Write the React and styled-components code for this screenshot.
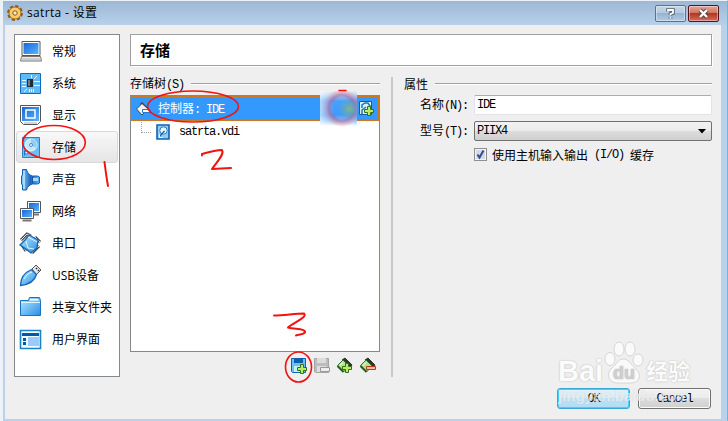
import React from "react";
import styled, { createGlobalStyle, css } from "styled-components";

const GlobalStyle = createGlobalStyle`
  * {
    box-sizing: border-box;
  }
  body {
    margin: 0;
    overflow: hidden;
    font-family: "Noto Sans CJK SC", sans-serif;
    font-size: 12px;
    color: #000;
  }
  svg {
    display: block;
    flex-shrink: 0;
  }
`;

const Window = styled.div`
  position: relative;
  width: 728px;
  height: 421px;
  padding: 0 6px 2px 2px;
  border-top: 1px solid #eef2f6;
  border-left: 3px solid #edf2f9;
  border-right: 1px solid #45c8f0;
  background: linear-gradient(#9db8d5, #b9d1ea 25px, #b9d1ea);
`;

const TitleBar = styled.div`
  display: flex;
  align-items: center;
  height: 24px;
  margin-left: -2px;
  padding-left: 4px;
`;

const Title = styled.span`
  flex: 1;
  margin-left: 4px;
  font-family: "Open Sans", "Noto Sans CJK SC", sans-serif;
  font-size: 12px;
  letter-spacing: 0.35px;
  line-height: 24px;
`;

const CaptionButton = styled.div`
  display: flex;
  align-items: center;
  justify-content: center;
  width: 31px;
  height: 17px;
  margin: 1px 2px 0 0;
  border: 1px solid ${(props) => (props.$close ? "#4e1420" : "#5b7190")};
  border-radius: 2px;
  box-shadow: inset 0 0 0 1px rgba(255, 255, 255, 0.4);
  background: ${(props) =>
    props.$close
      ? "linear-gradient(#e3a598, #d0735f 49%, #b93420 50%, #cf7058)"
      : "linear-gradient(#c3d5e9, #b3c9e1 49%, #97b3d1 50%, #b2cae4)"};
`;

const Body = styled.div`
  display: flex;
  height: 394px;
  padding: 9px 9px 0;
  background: #efefef;
`;

const Sidebar = styled.div`
  width: 106px;
  height: 343px;
  border: 1px solid #828790;
  background: #fff;
`;

const SideItem = styled.div`
  display: flex;
  align-items: center;
  height: 32px;
  margin: 0 1px;
  padding: 1px 0 0 2px;
  border: 1px solid transparent;
  border-radius: 3px;
  white-space: nowrap;
  ${(props) =>
    props.$active &&
    css`
      border-color: #d9d9d9;
      background: linear-gradient(#f8f8f8, #e5e5e5);
    `}
`;

const SideLabel = styled.span`
  margin: 1px 0 0 10px;
  font-family: "Open Sans", "Noto Sans CJK SC", sans-serif;
  line-height: 18px;
`;

const Main = styled.div`
  width: 582px;
  margin-left: 10px;
`;

const Header = styled.div`
  height: 32px;
  padding-left: 9px;
  border: 1px solid #a0a0a0;
  box-shadow: 1px 1px 0 #fff;
  background: #fff;
  font-size: 15px;
  font-weight: 700;
  line-height: 30px;
`;

const Columns = styled.div`
  display: flex;
  margin-top: 8px;
`;

const TreeColumn = styled.div`
  width: 250px;
`;

const Splitter = styled.div`
  width: 2px;
  height: 300px;
  margin: 3px 11px 0;
  background: #c8c8c8;
`;

const PropColumn = styled.div`
  width: 308px;
`;

const GroupTitle = styled.div`
  display: flex;
  align-items: center;
  height: 18px;
  margin-bottom: 3px;
  white-space: nowrap;

  &::after {
    content: "";
    flex: 1;
    height: 1px;
    margin-left: 7px;
    background: #a0a0a0;
    box-shadow: 0 1px 0 #fff;
  }
`;

// half-width characters are 6px wide
const Mono = styled.span`
  font-family: "Liberation Mono", monospace;
  font-size: 12px;
  letter-spacing: -1.2px;
  white-space: pre;
`;

const Tree = styled.div`
  height: 257px;
  border: 1px solid #828790;
  background: #fff;
`;

const TreeRow = styled.div`
  display: flex;
  align-items: center;
  height: 25px;
  padding: 0 3px;
  border: 1px dotted #d07a20;
  background: #3399ff;
  color: #fff;
`;

const TreeText = styled.span`
  flex: 1;
  margin-left: 6px;
  line-height: 18px;
`;

const TreeChild = styled.div`
  display: flex;
  align-items: center;
  gap: 9px;
  height: 22px;
  padding-left: 10px;
`;

const Branch = styled.div`
  width: 10px;
  height: 11px;
  margin: -10px -4px 0 0;
  border-left: 1px dotted #a0a0a0;
  border-bottom: 1px dotted #a0a0a0;
`;

const TreeTools = styled.div`
  display: flex;
  justify-content: flex-end;
  gap: 5px;
  padding: 5px 3px 0 0;
`;

const Field = styled.div`
  display: flex;
  align-items: center;
  height: 20px;
  margin-bottom: 6px;
`;

const FieldLabel = styled.span`
  width: 70px;
  padding-left: 16px;
  line-height: 18px;
  white-space: nowrap;
`;

const Input = styled.div`
  display: flex;
  align-items: center;
  width: 238px;
  height: 20px;
  padding-left: 2px;
  border: 1px solid #e2e3ea;
  border-top-color: #abadb3;
  border-radius: 2px;
  background: #fff;
`;

const Select = styled(Input)`
  justify-content: space-between;
  padding-right: 5px;
  border: 1px solid #707070;
  background: linear-gradient(#f2f2f2, #ebebeb 49%, #dddddd 50%, #cfcfcf);
`;

const CheckLine = styled.div`
  display: flex;
  align-items: center;
  height: 15px;
  margin-left: 70px;
  white-space: nowrap;
`;

const Check = styled.div`
  width: 13px;
  height: 13px;
  margin-right: 5px;
  border: 1px solid #8e8f8f;
  box-shadow: inset 0 0 0 1px #f4f4f4;
  background: #d5dae1;
`;

const Buttons = styled.div`
  display: flex;
  justify-content: flex-end;
  gap: 8px;
  margin-top: 11px;
  padding-right: 1px;
`;

const Button = styled.div`
  display: flex;
  align-items: center;
  justify-content: center;
  width: 73px;
  height: 21px;
  border: 1px solid ${(props) => (props.$primary ? "#3ba8d8" : "#707070")};
  border-radius: 3px;
  box-shadow: inset 0 0 0 1px ${(props) => (props.$primary ? "#42d3f5" : "#fafafa")};
  background: ${(props) =>
    props.$primary
      ? "linear-gradient(#e2f1fa, #d4ebf8 49%, #bce2f7 50%, #b0dcf4)"
      : "linear-gradient(#f2f2f2, #ebebeb 49%, #dddddd 50%, #cfcfcf)"};
`;

const Smudge = styled.div`
  position: absolute;
  left: 317px;
  top: 90px;
  width: 37px;
  height: 36px;
  background: radial-gradient(circle at 29px 18px, #7fb58d 0, rgba(110, 170, 170, 0.8) 4px, transparent 10px),
    radial-gradient(circle at 22px 17px, transparent 9px, rgba(170, 90, 150, 0.55) 13px, rgba(240, 130, 140, 0.4) 16px, transparent 19px),
    linear-gradient(90deg, rgba(255, 255, 255, 0.6), transparent 14px),
    linear-gradient(#efefef 0, #a7cdf5 5px, #49a0fa 10px, #3d9cfb 24px, #86c0fa 29px, #fff 35px);
`;

const Marks = styled.svg`
  position: absolute;
  left: -3px;
  top: -1px;
  pointer-events: none;
`;

const Watermark = styled.div`
  position: absolute;
  left: 555px;
  top: 340px;
  width: 160px;
  height: 65px;
  pointer-events: none;
`;

const MarkLine = styled.div`
  display: flex;
  align-items: flex-end;
  height: 44px;
  color: #fbfbfb;
  font-family: "Liberation Sans", "Noto Sans CJK SC", sans-serif;
  font-size: 29px;
  font-weight: 700;
  line-height: 28px;
  text-shadow: 0 0 1px #bbb, 0 0 2px #ccc;
`;

const MarkCn = styled.span`
  margin-left: 2px;
  font-size: 22px;
  line-height: 26px;
`;

const MarkUrl = styled.div`
  margin-top: 2px;
  color: rgba(255, 255, 255, 0.65);
  font-family: "Liberation Sans", sans-serif;
  font-size: 15px;
  font-weight: 700;
  line-height: 18px;
  text-shadow: 0 0 1px rgba(150, 150, 150, 0.4);
`;

const PawText = styled.text`
  font-family: "Liberation Sans", sans-serif;
  font-size: 18px;
  font-weight: 700;
`;

const Defs = () => (
  <defs>
    <linearGradient id="screen" x1="0" y1="0" x2="1" y2="1">
      <stop offset="0" stopColor="#1568d8" />
      <stop offset="1" stopColor="#5cb2fc" />
    </linearGradient>
    <linearGradient id="sky" x1="0" y1="0" x2="1" y2="1">
      <stop offset="0" stopColor="#b9ecff" />
      <stop offset="1" stopColor="#288ee8" />
    </linearGradient>
    <linearGradient id="horn" x1="0" y1="0" x2="1" y2="0">
      <stop offset="0" stopColor="#8fd0fb" />
      <stop offset="0.5" stopColor="#1b66bd" />
      <stop offset="1" stopColor="#5bb3f3" />
    </linearGradient>
  </defs>
);

const sideIcons = {
  general: (
    <>
      <path d="M3 1.500h18v14H3z" fill="#fff" stroke="#555" />
      <path d="M4.500 3h15v11h-15z" fill="url(#screen)" />
      <path d="M2.500 16.500h19l1 4.500h-21z" fill="#eee" stroke="#777" />
      <path d="M3 19h18" stroke="#aaa" />
    </>
  ),
  system: (
    <>
      <path d="M1.500 1.500h20v20h-20z" fill="#5eb9f5" stroke="#126bb8" />
      <path d="M8 7h6v8H8z" fill="#242c33" />
      <path d="M9 8h2v6H9z" fill="#737c83" />
      <path d="M3 8.500h4M3 11.500h4M3 14.500h4M15 9.500h6M15 13.500h6M10.500 17v3M12.500 17v3M14.500 17v3M12.500 3v3M15 7l3-3M5 20l3-3" stroke="#e9faff" fill="none" />
    </>
  ),
  display: (
    <>
      <path d="M1.500 1.500h20v16l-3 3h-14l-3-3z" fill="#fff" stroke="#555" />
      <path d="M3 3h17v14H3z" fill="url(#screen)" />
      <path d="M7 6h9v8H7z" fill="none" stroke="#fff" strokeWidth="1.500" />
      <path d="M5 19h13" stroke="#aaa" />
    </>
  ),
  storage: (
    <>
      <path d="M3.500 1.500h17v20h-17z" fill="#6fbdf2" stroke="#2f7fc6" />
      <circle cx="12" cy="9" r="6" fill="#c3e8fc" stroke="#eafaff" />
      <path d="M12 3a6 6 0 0 1 5 9l-5-3z" fill="#93cdf3" />
      <circle cx="12" cy="9" r="1.500" fill="#fff" stroke="#3c8dd0" />
      <path d="M5.500 19.500v-5l3 1 5 3.500" fill="none" stroke="#2474b9" />
      <circle cx="7.500" cy="16.500" r="1.600" fill="#d5f1ff" stroke="#2474b9" />
    </>
  ),
  audio: (
    <>
      <path d="M3.500 1.500h4c1 4 3 5.500 6 6.500h5l2 1v6l-2 1h-5c-3 1-5 2.500-6 6h-4V17l-1-1V8l1-1z" fill="url(#horn)" stroke="#1760ad" />
      <path d="M4 3h2v18H4z" fill="#a9dcfc" />
      <path d="M14 10h5v3h-5z" fill="#a4dcfb" />
      <path d="M13.500 8v8" stroke="#165ba5" />
    </>
  ),
  network: (
    <>
      <path d="M8.500 1.500h13v11h-13z" fill="#fff" stroke="#555" />
      <path d="M10 3h10v8H10z" fill="url(#screen)" />
      <path d="M15 14.500h5" stroke="#777" strokeWidth="2" />
      <path d="M1.500 8.500h13v10h-13z" fill="#fff" stroke="#555" />
      <path d="M3 10h10v7H3z" fill="url(#screen)" />
      <path d="M3.500 20.500h9" stroke="#777" strokeWidth="2" />
    </>
  ),
  serial: (
    <>
      <path d="M2 8l6-6 4 2M16 5l5 5M3 13l4 6M13 21l7-7" fill="none" stroke="#444" strokeWidth="3" />
      <path d="M2 8l6-6 4 2M16 5l5 5M3 13l4 6M13 21l7-7" fill="none" stroke="#eee" />
      <path d="M10 3l9 5-1 8-6 5-8-6-3-2 5-5z" fill="url(#sky)" stroke="#1262ab" strokeWidth="1.300" />
      <path d="M7 9l2 7M9 5l9 5M9 16l6 1" fill="none" stroke="#ddf7ff" />
    </>
  ),
  usb: (
    <>
      <path d="M13 5l4-4 5 5-5 5z" fill="#e8e8e8" stroke="#555" />
      <path d="M17 4l1 1M19 6l1 1" stroke="#222" strokeWidth="1.500" />
      <path d="M1.500 21.500c0-8 4-13 11-16l5 5c-2 7-7 10-16 11z" fill="url(#sky)" stroke="#1767b2" strokeWidth="1.300" />
      <path d="M5 15c2-4 5-6 8-7" stroke="#dff9ff" fill="none" />
    </>
  ),
  folder: (
    <>
      <path d="M1.500 19.500v-15h8l1-3h10l1 3v15z" fill="url(#sky)" stroke="#1972bd" />
      <path d="M11 3h8l1 1.500h-9z" fill="#fff" />
      <path d="M2 6.500h19" stroke="#d9f5ff" />
    </>
  ),
  ui: (
    <>
      <path d="M1.500 2.500h20v18h-20z" fill="#eefbff" stroke="#1b82ca" strokeWidth="1.600" />
      <path d="M3 5h17v3H3zM4 10h3v3H4zM4 14h3v3H4z" fill="#0755a4" />
      <path d="M9 9h11v9H9z" fill="#9bcaff" />
    </>
  ),
};

const sections = [
  ["general", "常规"],
  ["system", "系统"],
  ["display", "显示"],
  ["storage", "存储"],
  ["audio", "声音"],
  ["network", "网络"],
  ["serial", "串口"],
  ["usb", "USB设备"],
  ["folder", "共享文件夹"],
  ["ui", "用户界面"],
];

const Plus = () => (
  <path d="M9.500 6.500h3v3h3v3h-3v3h-3v-3h-3v-3h3z" fill="#b7ee66" stroke="#347018" />
);

const Floppy = ({ disabled }) => (
  <svg width="18" height="18" viewBox="0 0 18 18">
    <path
      d="M1.500 1.500h14v14h-13l-1-1z"
      fill={disabled ? "#bdbdbd" : "#6fc0f2"}
      stroke={disabled ? "#a4a4a4" : "#0965ad"}
    />
    <path d="M4 1h9v5H4z" fill={disabled ? "#dcdcdc" : "#0b5fae"} />
    <path d="M4 9h9v6H4z" fill={disabled ? "#dedede" : "#c5efff"} />
    {disabled ? (
      <path d="M7.500 10.500h9v4h-9z" fill="#eee" stroke="#999" />
    ) : (
      <g transform="translate(1 1)">
        <Plus />
      </g>
    )}
  </svg>
);

const Controller = ({ remove }) => (
  <svg width="18" height="18" viewBox="0 0 18 18">
    <path d="M6 3l3-2 7 7-2 3z" fill="#30362e" stroke="#30362e" />
    <path d="M1.500 8.500L7 3l6 6-5.500 6z" fill="#b9e08f" stroke="#26782a" />
    <path d="M1.500 9l6 6" stroke="#1c5f1e" strokeWidth="2" />
    <path d="M4 8.500l3-3" stroke="#fff" />
    {remove ? (
      <path d="M7.500 9.500h9v3h-9z" fill="#ffb99a" stroke="#bd361e" />
    ) : (
      <Plus />
    )}
  </svg>
);

const App = () => (
  <>
    <GlobalStyle />
    <Window>
      <TitleBar>
        <svg width="16" height="16" viewBox="0 0 16 16">
          <circle cx="8" cy="8" r="6.800" fill="none" stroke="#8f5a14" strokeWidth="2.200" strokeDasharray="3.300 2.040" />
          <circle cx="8" cy="8" r="6" fill="#ffca69" stroke="#a56b1d" />
          <circle cx="8" cy="8" r="2.200" fill="#fff0cc" stroke="#80561d" />
        </svg>
        <Title>satrta - 设置</Title>
        <CaptionButton>
          <svg width="11" height="13" viewBox="0 0 11 13">
            <path d="M3 4.500V3h5v3L5.500 7v1M5.500 10v1.500" fill="none" stroke="#56606c" strokeWidth="3.600" />
            <path d="M3 4.500V3h5v3L5.500 7v1M5.500 10v1.500" fill="none" stroke="#fff" strokeWidth="1.800" />
          </svg>
        </CaptionButton>
        <CaptionButton $close>
          <svg width="13" height="11" viewBox="0 0 13 11">
            <path d="M3 2l7 7M10 2L3 9" stroke="#55454b" strokeWidth="4.300" />
            <path d="M3 2l7 7M10 2L3 9" stroke="#fff" strokeWidth="2.400" />
          </svg>
        </CaptionButton>
      </TitleBar>
      <Body>
        <Sidebar>
          {sections.map(([icon, label]) => (
            <SideItem key={icon} $active={icon === "storage"}>
              <svg width="23" height="23" viewBox="0 0 23 23">
                <Defs />
                {sideIcons[icon]}
              </svg>
              <SideLabel>{label}</SideLabel>
            </SideItem>
          ))}
        </Sidebar>
        <Main>
          <Header>存储</Header>
          <Columns>
            <TreeColumn>
              <GroupTitle>
                <span>
                  存储树<Mono>(S)</Mono>
                </span>
              </GroupTitle>
              <Tree>
                <TreeRow>
                  <svg width="17" height="16" viewBox="0 0 17 16">
                    <path d="M7 1l7 7-2 4-7-9z" fill="#343434" />
                    <path d="M1.500 8L7 2.500l6 5.500-6 6z" fill="#f5f5f5" stroke="#444" />
                    <path d="M7.500 8.500h8v3h-8z" fill="#fff" stroke="#237bd0" />
                  </svg>
                  <TreeText>
                    控制器<Mono>: IDE</Mono>
                  </TreeText>
                  <svg width="17" height="17" viewBox="0 0 17 17">
                    <path d="M1.500 1.500h12v13h-12z" fill="#d7f2ff" stroke="#125e9f" />
                    <path d="M4 8V5l3-2h3l2 3v3M4 14v-4l4-3" fill="none" stroke="#2573b3" strokeWidth="1.500" />
                    <Plus />
                  </svg>
                </TreeRow>
                <TreeChild>
                  <Branch />
                  <svg width="14" height="16" viewBox="0 0 14 16">
                    <path d="M1 1h12v14H1z" fill="#8fcdf5" stroke="#1262ad" strokeWidth="1.600" />
                    <circle cx="7.500" cy="6.500" r="3.700" fill="#e6f7ff" stroke="#2e7fc4" />
                    <path d="M3.500 12.500l5-5.500" stroke="#1d62a6" strokeWidth="1.400" />
                    <path d="M3.500 10.500v3h3" fill="none" stroke="#fff" />
                  </svg>
                  <Mono>satrta.vdi</Mono>
                </TreeChild>
              </Tree>
              <TreeTools>
                <Floppy />
                <Floppy disabled />
                <Controller />
                <Controller remove />
              </TreeTools>
            </TreeColumn>
            <Splitter />
            <PropColumn>
              <GroupTitle>属性</GroupTitle>
              <Field>
                <FieldLabel>
                  名称<Mono>(N):</Mono>
                </FieldLabel>
                <Input>
                  <Mono>IDE</Mono>
                </Input>
              </Field>
              <Field>
                <FieldLabel>
                  型号<Mono>(T):</Mono>
                </FieldLabel>
                <Select>
                  <Mono>PIIX4</Mono>
                  <svg width="8" height="5" viewBox="0 0 8 5">
                    <path d="M0 0h8L4 4.500z" fill="#000" />
                  </svg>
                </Select>
              </Field>
              <CheckLine>
                <Check>
                  <svg width="11" height="11" viewBox="0 0 11 11">
                    <path d="M2.500 5.500l2 3 4-7" fill="none" stroke="#2f4c95" strokeWidth="2" />
                  </svg>
                </Check>
                使用主机输入输出<Mono> (I/O) </Mono>缓存
              </CheckLine>
            </PropColumn>
          </Columns>
          <Buttons>
            <Button $primary>
              <Mono>OK</Mono>
            </Button>
            <Button>
              <Mono>Cancel</Mono>
            </Button>
          </Buttons>
        </Main>
      </Body>
      <Smudge />
      <Watermark>
        <MarkLine>
          Bai
          <svg width="41" height="44" viewBox="0 0 41 44">
            <g fill="#fafafa" stroke="#d6d6d6">
              <ellipse cx="7" cy="18" rx="5" ry="6.500" />
              <ellipse cx="16" cy="8" rx="5" ry="7" />
              <ellipse cx="27" cy="8" rx="5" ry="7" />
              <ellipse cx="35" cy="19" rx="5" ry="6" />
              <path d="M20 18c-5 0-6 5-11 9-6 5-4 14 4 15h15c9 0 11-9 5-14-6-5-7-10-13-10z" />
            </g>
            <PawText x="10" y="38" fill="#cfcfcf">
              du
            </PawText>
          </svg>
          <MarkCn>经验</MarkCn>
        </MarkLine>
        <MarkUrl>jingyan.baidu.com</MarkUrl>
      </Watermark>
      <Marks width="728" height="421" fill="none" stroke="#f11212" strokeWidth="1.600" strokeLinecap="round" strokeLinejoin="round">
        <ellipse cx="54" cy="142.500" rx="31.300" ry="17" />
        <ellipse cx="193" cy="106.500" rx="45.500" ry="15.500" />
        <ellipse cx="298.500" cy="367" rx="13" ry="15" />
        <path d="M339 90.500h7" />
        <path d="M104.500 162c1 8 2 16 3.500 24" strokeWidth="2" />
        <path d="M202 155.500v-1.500c7-2 14-4 20-4 3 4-6 13-10 19l19-1" strokeWidth="2" />
        <path d="M274 315.500c10 0 21-2 30-2 4 4-11 9-16 14 7 2 18 1 17 5-2 2-5 2-9 3" strokeWidth="2" />
      </Marks>
    </Window>
  </>
);

export default App;
